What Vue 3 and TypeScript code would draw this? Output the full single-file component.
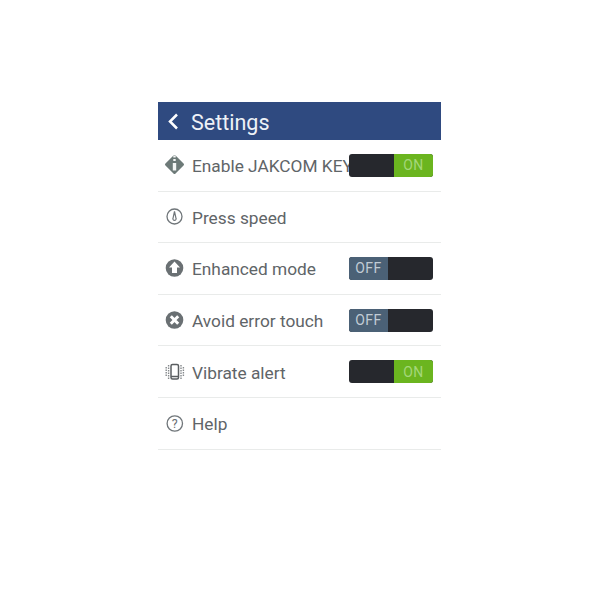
<script setup lang="ts">
type Row = {
  icon: string
  label: string
  toggle?: 'on' | 'off'
}

const rows: Row[] = [
  { icon: 'key', label: 'Enable JAKCOM KEY', toggle: 'on' },
  { icon: 'speed', label: 'Press speed' },
  { icon: 'up', label: 'Enhanced mode', toggle: 'off' },
  { icon: 'cross', label: 'Avoid error touch', toggle: 'off' },
  { icon: 'vibrate', label: 'Vibrate alert', toggle: 'on' },
  { icon: 'help', label: 'Help' },
]
</script>

<template>
  <div class="page">
    <div class="panel">
      <header class="bar">
        <svg class="back" width="12" height="18" viewBox="0 0 12 18">
          <path d="M10 2.500 3 9.500l7 7" fill="none" stroke="#fff" stroke-width="2.500" />
        </svg>
        <span class="bar-title">Settings</span>
      </header>
      <div v-for="row in rows" :key="row.label" class="row">
        <svg class="icon" width="22" height="22" viewBox="0 0 22 22">
          <template v-if="row.icon === 'key'">
            <path d="M10.500 2.500 18.500 10.500 10.500 18.500 2.500 10.500Z" fill="#6d7a78" stroke="#6d7a78" stroke-width="3" stroke-linejoin="round" />
            <path d="M9.300 1.500h2.400v2h-2.400zM9.300 5h2.400v2h-2.400zM8.800 9h3.400v7.500H8.800z" fill="#f4f6f5" />
          </template>
          <template v-else-if="row.icon === 'speed'">
            <circle cx="10.500" cy="10.500" r="7.500" fill="none" stroke="#70767a" stroke-width="1.300" />
            <path d="M10.500 5.500 12 12.300a1.600 1.600 0 1 1-3 0Z" fill="none" stroke="#70767a" stroke-width="1.200" />
          </template>
          <template v-else-if="row.icon === 'up'">
            <circle cx="10.500" cy="11" r="8.800" fill="#6a7073" />
            <path d="M10.500 4.500 16 10.500H13V16H8V10.500H5Z" fill="#fff" />
          </template>
          <template v-else-if="row.icon === 'cross'">
            <circle cx="10.500" cy="11" r="8.800" fill="#6a7073" />
            <path d="M6.800 7.300l7.400 7.400M14.200 7.300l-7.400 7.400" stroke="#fff" stroke-width="3" />
          </template>
          <template v-else-if="row.icon === 'vibrate'">
            <rect x="7" y="3.500" width="7.500" height="14.500" rx="1.500" fill="none" stroke="#5a5e61" stroke-width="1.500" />
            <path d="M7 15.500h7.500" stroke="#5a5e61" stroke-width="1.500" />
            <path d="M4.600 4v14M2.200 6v10M17 4v14M19.400 6v10" stroke="#85898c" stroke-width="1.400" stroke-dasharray="1.500 1" />
          </template>
          <template v-else>
            <circle cx="10.800" cy="11.500" r="7.700" fill="none" stroke="#70767a" stroke-width="1.300" />
            <text x="10.800" y="15.800" text-anchor="middle" class="qmark">?</text>
          </template>
        </svg>
        <span class="label">{{ row.label }}</span>
        <div v-if="row.toggle" class="toggle" :class="'toggle--' + row.toggle">
          <span class="knob">{{ row.toggle === 'on' ? 'ON' : 'OFF' }}</span>
        </div>
      </div>
    </div>
  </div>
</template>

<style>
html,
body {
  background: #fff;
}
</style>

<style scoped>
.page {
  width: 600px;
  height: 600px;
  padding: 102px 0 0 158px;
  box-sizing: border-box;
  font-family: Roboto, 'Liberation Sans', sans-serif;
}
.panel {
  width: 283px;
}
.bar {
  height: 38px;
  display: flex;
  align-items: center;
  gap: 12px;
  padding-left: 9px;
  background: #2f4a80;
  color: #eef2f7;
}
.back {
  flex: none;
}
.bar-title {
  padding-top: 2px;
  font-size: 21.500px;
}
.row {
  height: 51.600px;
  box-sizing: border-box;
  display: flex;
  align-items: center;
  padding: 0 8px 0 6px;
  border-bottom: 1px solid #e9ebea;
}
.icon {
  flex: none;
  margin-right: 6px;
}
.qmark {
  font-size: 12.500px;
  fill: #6a7073;
  font-family: Roboto, sans-serif;
}
.label {
  flex: 1;
  min-width: 0;
  padding-top: 2px;
  overflow: hidden;
  white-space: nowrap;
  font-size: 17.300px;
  color: #5f6568;
}
.toggle {
  flex: none;
  width: 84px;
  height: 23px;
  display: flex;
  border-radius: 3px;
  background: #26282d;
  overflow: hidden;
}
.toggle--on {
  justify-content: flex-end;
}
.knob {
  width: 39px;
  display: flex;
  align-items: center;
  justify-content: center;
  font-size: 14px;
  letter-spacing: 0.5px;
}
.toggle--on .knob {
  background: #6bb51f;
  color: #a5d77a;
}
.toggle--off .knob {
  background: #4b6176;
  color: #c1ccd5;
}
</style>
